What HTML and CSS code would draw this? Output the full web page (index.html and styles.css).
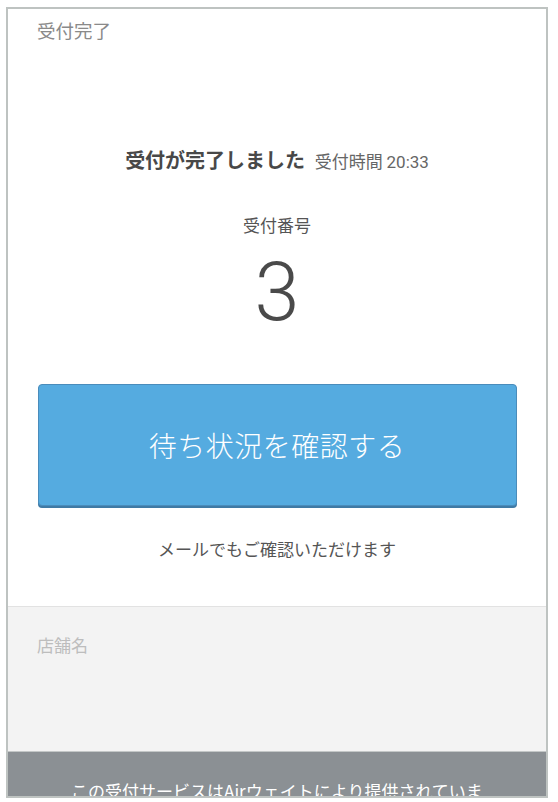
FILE: index.html
```html
<!DOCTYPE html>
<html lang="ja">
<head>
    <meta charset="UTF-8">
    <meta name="viewport" content="width=device-width, initial-scale=1.0">
    <title>受付完了</title>
    <link rel="stylesheet" href="styles.css">
</head>
<body>
    <div class="frame">
        <div class="header">受付完了</div>
        <div class="main">
            <div class="title">
                <span class="title-main">受付が完了しました</span>
                <span class="title-time">受付時間 <span class="num">20:33</span></span>
            </div>
            <div class="label">受付番号</div>
            <div class="number">3</div>
            <button class="btn">待ち状況を確認する</button>
            <div class="note">メールでもご確認いただけます</div>
        </div>
        <div class="shop">店舗名</div>
        <div class="footer">この受付サービスはAirウェイトにより提供されています。</div>
    </div>
</body>
</html>
```

FILE: styles.css
```css
body {
    margin: 0;
    background: #fff;
    font-family: "Noto Sans CJK JP", "Noto Sans", sans-serif;
    color: #444;
}
.frame {
    margin: 7px 10px 0 6px;
    height: 791px;
    box-sizing: border-box;
    border: 2px solid #bec3c1;
    display: flex;
    flex-direction: column;
    overflow: hidden;
}
.header {
    flex-shrink: 0;
    padding: 11px 29px 0;
    font-size: 18.5px;
    line-height: 20px;
    color: #8a8a8a;
}
.main {
    flex-shrink: 0;
    display: flex;
    flex-direction: column;
    align-items: center;
    padding: 108px 0 47px;
}
.title {
    line-height: 24px;
    white-space: nowrap;
}
.title-main {
    font-size: 20px;
    font-weight: bold;
    color: #484848;
}
.title-time {
    font-size: 17px;
    color: #666;
    margin-left: 6px;
}
.num {
    font-family: Roboto, "Liberation Sans", sans-serif;
}
.label {
    margin-top: 41px;
    font-size: 17px;
    line-height: 20px;
    color: #555;
}
.number {
    margin-top: 18px;
    font-family: Roboto, "Liberation Sans", sans-serif;
    font-weight: 300;
    font-size: 81px;
    line-height: 80px;
    color: #4a4a4a;
}
.btn {
    margin-top: 51px;
    width: 479px;
    height: 122px;
    background: #55abe0;
    border: 1px solid #4a8cbb;
    border-radius: 4px;
    box-shadow: 0 2px 0 #3f7aa5;
    color: #fff;
    font-family: "Noto Sans CJK JP", sans-serif;
    font-size: 28px;
    font-weight: 300;
    letter-spacing: 0.5px;
    cursor: pointer;
}
.note {
    margin-top: 33px;
    font-size: 17px;
    line-height: 20px;
    color: #555;
}
.shop {
    flex-shrink: 0;
    height: 145px;
    box-sizing: border-box;
    padding: 28px 29px 0;
    background: #f3f3f3;
    border-top: 1px solid #e2e2e2;
    font-size: 17px;
    line-height: 20px;
    color: #bdbdbd;
}
.footer {
    flex: 1;
    min-height: 0;
    padding: 27px 55px 0;
    background: #8b9094;
    border-top: 1px solid #c3c7c7;
    color: #fff;
    font-size: 17px;
    line-height: 24px;
    text-align: center;
}
```
